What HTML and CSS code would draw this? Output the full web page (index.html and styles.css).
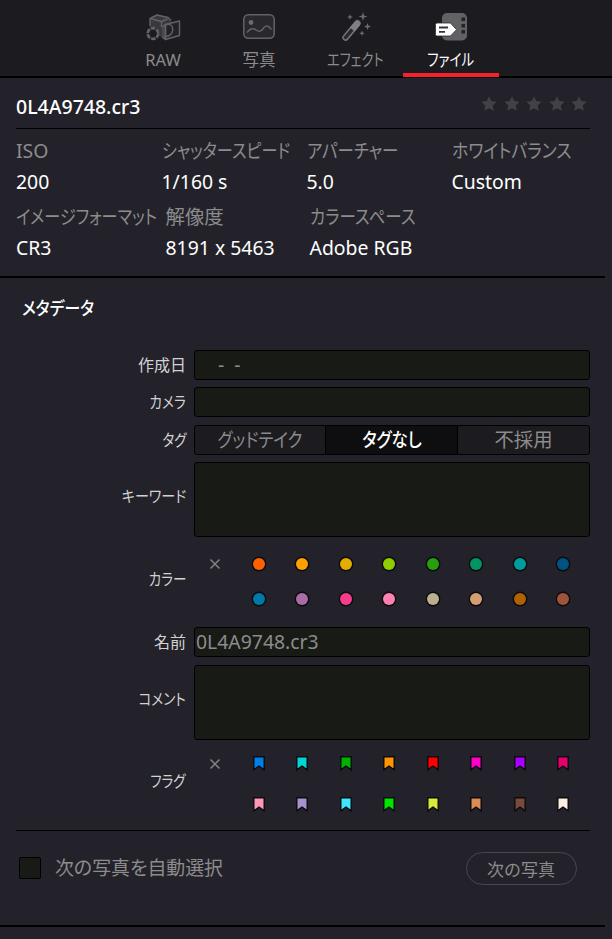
FILE: index.html
```html
<!DOCTYPE html>
<html lang="ja">
  <head>
    <meta charset="UTF-8">
    <meta name="viewport" content="width=device-width, initial-scale=1">
    <title>ファイル</title>
    <link rel="stylesheet" href="styles.css">
  </head>
  <body>
    <svg class="defs">
      <symbol id="flag" viewBox="0 0 12 15">
        <path d="M.8.8h10.4v13.1L6 10 .8 13.9z" fill="currentColor" stroke="#0b0b0d" stroke-width="1.4" />
      </symbol>
      <symbol id="star" viewBox="0 0 16 15">
        <path d="M8 .2l2.3 4.9 5.3.7-3.9 3.7 1 5.3L8 12.2l-4.7 2.6 1-5.3L.4 5.8l5.3-.7z" fill="currentColor" />
      </symbol>
      <symbol id="cross" viewBox="0 0 12 12">
        <path d="M1.5 1.5l9 9m0-9l-9 9" fill="none" stroke="currentColor" stroke-width="1.5" />
      </symbol>
    </svg>
    <nav>
      <a class="tab">
        <svg width="36" height="30" viewBox="0 0 36 30" fill="none" stroke="#636367" stroke-width="1.4" stroke-linejoin="round">
          <path d="M5 15V6.500L12 3l11 2.500 3.500 3.500v14L16 25z" fill="#39393d" stroke="none" />
          <path d="M5 14V6.500L12 3l11 2.500 3 3M5 6.500l11.500 3 6-2.500M16.500 9.500V15" />
          <path d="M20.500 12.500L34.500 9v14.500l-14 4z" fill="#232327" />
          <path d="M17 15l3.500-2.500v15L17 25" fill="#4a4a4e" />
          <path d="M21 12.800c9-3 9 11 0 11.700" />
          <circle cx="8" cy="21.500" r="6.500" fill="#1c1b20" stroke="none" />
          <circle cx="8" cy="21.500" r="5.300" stroke-width="2.800" stroke-dasharray="4.500 1.050" />
        </svg>
        <span>RAW</span>
      </a>
      <a class="tab">
        <svg width="36" height="30" viewBox="0 0 36 30" fill="none" stroke="#636367" stroke-width="1.5">
          <rect x="2.800" y="2.800" width="30.400" height="23.400" rx="4.500" fill="#29292d" />
          <circle cx="10" cy="10.500" r="2.400" fill="#6c6c70" stroke="none" />
          <path d="M6.500 20c3-4 6-4 8.500-2 4 3 6 0 8-2.500 3-3 5-1 7 1.500" stroke-linecap="round" />
        </svg>
        <span>写真</span>
      </a>
      <a class="tab">
        <svg width="36" height="30" viewBox="0 0 36 30" fill="#6c6c70">
          <g transform="rotate(40 14 19)">
            <rect x="11.500" y="6.500" width="5" height="23.500" rx="2.500" fill="#29292d" stroke="#727276" stroke-width="1.600" />
            <path d="M11 9q3-5 6 0v8h-6z" fill="#808084" />
          </g>
          <path d="M13 2l.8 2.200 2.200.8-2.200.8L13 8l-.8-2.200L10 5l2.200-.8zM26 0l1 3.500 3.500 1-3.500 1L26 9l-1-3.500-3.500-1 3.500-1zM30.500 11l.9 2.600 2.600.9-2.600.9-.9 2.600-.9-2.600-2.600-.9 2.600-.9zM25 18.500l.8 2 2 .8-2 .8-.8 2-.8-2-2-.8 2-.8z" />
        </svg>
        <span class="kana w-effect">エフェクト</span>
      </a>
      <a class="tab active">
        <svg width="36" height="30" viewBox="0 0 36 30">
          <rect x="9" y="1" width="25" height="27.500" rx="5" fill="#626266" />
          <path d="M28.500 5.500H32V9h-3.500zm0 6.500H32v3.500h-3.500zm0 6H32v3.500h-3.500z" fill="#232327" />
          <path d="M4 11h13.500l6 6.700-6 6.300H4a1.500 1.500 0 0 1-1.500-1.500v-10A1.500 1.500 0 0 1 4 11z" fill="#fff" stroke="#2b2b2f" stroke-width=".8" />
          <path d="M6 15.500h9M6 19.800h6" stroke="#333337" stroke-width="1.800" />
        </svg>
        <span class="kana w-file">ファイル</span>
      </a>
    </nav>

    <header>
      <div class="title">
        <h1>0L4A9748.cr3</h1>
        <div class="stars">
          <svg><use href="#star" /></svg>
          <svg><use href="#star" /></svg>
          <svg><use href="#star" /></svg>
          <svg><use href="#star" /></svg>
          <svg><use href="#star" /></svg>
        </div>
      </div>
      <dl class="info">
        <div><dt>ISO</dt><dd>200</dd></div>
        <div><dt><span class="kana w-shutter">シャッタースピード</span></dt><dd>1/160 s</dd></div>
        <div><dt><span class="kana">アパーチャー</span></dt><dd>5.0</dd></div>
        <div><dt><span class="kana w-balance">ホワイトバランス</span></dt><dd>Custom</dd></div>
      </dl>
      <dl class="info info-format">
        <div><dt><span class="kana w-format">イメージフォーマット</span></dt><dd>CR3</dd></div>
        <div><dt>解像度</dt><dd>8191 x 5463</dd></div>
        <div><dt><span class="kana">カラースペース</span></dt><dd>Adobe RGB</dd></div>
      </dl>
    </header>

    <main>
      <h2><span class="kana w-meta">メタデータ</span></h2>
      <form>
        <label>作成日</label>
        <div class="field date">-&nbsp; -</div>

        <label><span class="kana">カメラ</span></label>
        <div class="field"></div>

        <label><span class="kana">タグ</span></label>
        <div class="field tags">
          <span><i class="kana">グッドテイク</i></span>
          <span class="on"><i class="kana">タグなし</i></span>
          <span>不採用</span>
        </div>

        <label class="tall"><span class="kana w-keyword">キーワード</span></label>
        <div class="field"></div>

        <label class="tall"><span class="kana">カラー</span></label>
        <div class="swatches colors">
          <svg class="cross"><use href="#cross" /></svg>
          <b class="orange"></b>
          <b class="apricot"></b>
          <b class="yellow"></b>
          <b class="lime"></b>
          <b class="olive"></b>
          <b class="green"></b>
          <b class="teal"></b>
          <b class="navy"></b>
          <i></i>
          <b class="blue"></b>
          <b class="purple"></b>
          <b class="violet"></b>
          <b class="pink"></b>
          <b class="tan"></b>
          <b class="beige"></b>
          <b class="brown"></b>
          <b class="chocolate"></b>
        </div>

        <label>名前</label>
        <div class="field">0L4A9748.cr3</div>

        <label class="tall"><span class="kana">コメント</span></label>
        <div class="field"></div>

        <label class="tall"><span class="kana">フラグ</span></label>
        <div class="swatches flags">
          <svg class="cross"><use href="#cross" /></svg>
          <svg class="f-blue"><use href="#flag" /></svg>
          <svg class="f-cyan"><use href="#flag" /></svg>
          <svg class="f-green"><use href="#flag" /></svg>
          <svg class="f-yellow"><use href="#flag" /></svg>
          <svg class="f-red"><use href="#flag" /></svg>
          <svg class="f-pink"><use href="#flag" /></svg>
          <svg class="f-purple"><use href="#flag" /></svg>
          <svg class="f-fuchsia"><use href="#flag" /></svg>
          <i></i>
          <svg class="f-rose"><use href="#flag" /></svg>
          <svg class="f-lavender"><use href="#flag" /></svg>
          <svg class="f-sky"><use href="#flag" /></svg>
          <svg class="f-mint"><use href="#flag" /></svg>
          <svg class="f-lemon"><use href="#flag" /></svg>
          <svg class="f-sand"><use href="#flag" /></svg>
          <svg class="f-cocoa"><use href="#flag" /></svg>
          <svg class="f-cream"><use href="#flag" /></svg>
        </div>
      </form>
      <div class="next">
        <span class="checkbox"></span>
        <p><span class="kana w-next">次の写真を自動選択</span></p>
        <button type="button">次の写真</button>
      </div>
    </main>
  </body>
</html>
```
FILE: styles.css
```css
body {
  background-color: #23222a;
  color: #8c8c8c;
  font-family: "Noto Sans", "Noto Sans CJK JP", sans-serif;
  font-size: 19.4px;
  line-height: 30px;
  margin: 0;
}
h1, h2, p, dl, dd {
  margin: 0;
}
i {
  font-style: normal;
}
.defs {
  display: none;
}

/* Proportional kana, narrowed to the width of the UI font */
.kana {
  display: inline-block;
  font-feature-settings: "palt";
  transform: scaleX(.85);
  transform-origin: left;
  white-space: nowrap;
}
.w-effect {
  transform: scaleX(.8);
}
.w-file {
  transform: scaleX(.82);
}
.w-shutter, .w-format {
  transform: scaleX(.832);
}
.w-balance {
  transform: scaleX(.87);
}
.w-meta, .w-keyword {
  transform: scaleX(.88);
}
.w-next {
  transform: scaleX(.975);
}

nav {
  background-color: #1c1b20;
  border-bottom: 2px solid #000;
  box-sizing: border-box;
  display: flex;
  height: 78px;
  padding-left: 115px;
}
.tab {
  align-items: center;
  border-bottom: 4px solid transparent;
  box-sizing: border-box;
  display: flex;
  flex-direction: column;
  font-size: 16.5px;
  height: 77px;
  line-height: 24px;
  padding-top: 12px;
  width: 96px;
}
.tab svg {
  margin-bottom: 6px;
}
.tab .kana {
  transform-origin: center;
}
.active {
  border-color: #f5222d;
  color: #fff;
}

header {
  border-bottom: 2px solid #000;
  box-sizing: border-box;
  height: 200px;
  margin-right: 7px;
  padding: 14px 15px 0 16px;
}
.title {
  border-bottom: 1px solid #000;
  display: flex;
  height: 36px;
  justify-content: space-between;
}
h1 {
  color: #fff;
  font-size: 19.5px;
  font-weight: 500;
}
.stars {
  color: #414146;
  display: flex;
  gap: 6.5px;
  margin: 4px 3px 0 0;
}
.stars svg {
  height: 15px;
  width: 16px;
}
.info {
  display: grid;
  grid-template-columns: 145.5px 145px 145px 1fr;
  padding-top: 7px;
}
.info-format {
  grid-template-columns: 149.5px 144px 1fr;
  padding-top: 4px;
}
.info dt, .info dd {
  height: 31px;
  white-space: nowrap;
}
.info dd {
  color: #fff;
}

main {
  border-bottom: 2px solid #000;
  box-sizing: border-box;
  height: 649px;
  margin-right: 7px;
  padding: 15px 15px 0 16px;
}
h2 {
  color: #fff;
  font-size: 18px;
  font-weight: 500;
  padding-left: 6px;
}
form {
  border-bottom: 1px solid #000;
  column-gap: 7px;
  display: grid;
  grid-template-columns: 171px 396px;
  grid-template-rows: 30px 30px 30px 75px 75px 30px 75px 75px;
  height: 480px;
  padding-top: 26.6px;
  row-gap: 7.5px;
}
label {
  align-self: center;
  color: #d2d2d2;
  font-size: 16px;
  padding-right: 1px;
  text-align: right;
}
label .kana {
  transform-origin: right;
}
.tall {
  padding-bottom: 7px;
}
.field {
  background-color: #181a16;
  border: 1px solid #000;
  border-radius: 3px;
  box-sizing: border-box;
  line-height: 28px;
  padding-left: 1px;
}
.date {
  padding-left: 23px;
}
.tags {
  background-color: #1c1b20;
  display: grid;
  grid-template-columns: 130px 133px 1fr;
  padding-left: 0;
  text-align: center;
}
.tags .kana {
  transform-origin: center;
}
.tags .on {
  background-color: #0e0e11;
  border: solid #000;
  border-width: 0 1px;
  color: #fff;
  font-weight: 500;
}
.swatches {
  align-content: center;
  align-items: center;
  display: grid;
  grid-template-columns: repeat(9, 43.5px);
  grid-template-rows: 35px 35px;
  justify-items: center;
  margin-left: -.6px;
  padding-bottom: 1px;
}
.flags {
  grid-template-rows: 41px 41px;
}
.flags svg {
  height: 15px;
  width: 12px;
}
.swatches .cross {
  color: #838383;
  height: 12px;
  width: 12px;
}
.colors b {
  border-radius: 50%;
  box-shadow: 0 0 0 1.4px #0b0b0d;
  height: 12px;
  width: 12px;
}
.orange { background-color: #ff6000; }
.apricot { background-color: #ffa000; }
.yellow { background-color: #e5ac00; }
.lime { background-color: #8fcc00; }
.olive { background-color: #269e0d; }
.green { background-color: #009462; }
.teal { background-color: #009c9c; }
.navy { background-color: #005280; }
.blue { background-color: #0078a8; }
.purple { background-color: #a96ca5; }
.violet { background-color: #f83c8c; }
.pink { background-color: #ff80b5; }
.tan { background-color: #bcae91; }
.beige { background-color: #d59d74; }
.brown { background-color: #b06100; }
.chocolate { background-color: #9e5438; }

.f-blue { color: #007fe8; }
.f-cyan { color: #00d5d5; }
.f-green { color: #00b200; }
.f-yellow { color: #ff9500; }
.f-red { color: #ff0000; }
.f-pink { color: #ff00c8; }
.f-purple { color: #aa00ff; }
.f-fuchsia { color: #e5006e; }
.f-rose { color: #ff98b8; }
.f-lavender { color: #a990ce; }
.f-sky { color: #40e5ff; }
.f-mint { color: #00e500; }
.f-lemon { color: #d8ed3a; }
.f-sand { color: #d88d55; }
.f-cocoa { color: #7a4b3c; }
.f-cream { color: #ffede5; }

.next {
  align-items: center;
  display: flex;
  height: 75px;
  padding-left: 3px;
}
.checkbox {
  background-color: #181a16;
  border: 1px solid #000;
  border-radius: 2px;
  height: 20px;
  margin-right: 14px;
  width: 20px;
}
.next p {
  flex-grow: 1;
}
button {
  background: none;
  border: 1px solid #454850;
  border-radius: 17px;
  color: inherit;
  font-family: inherit;
  font-size: 17px;
  height: 33px;
  margin-right: 13.5px;
  padding: 0;
  width: 111px;
}
```
